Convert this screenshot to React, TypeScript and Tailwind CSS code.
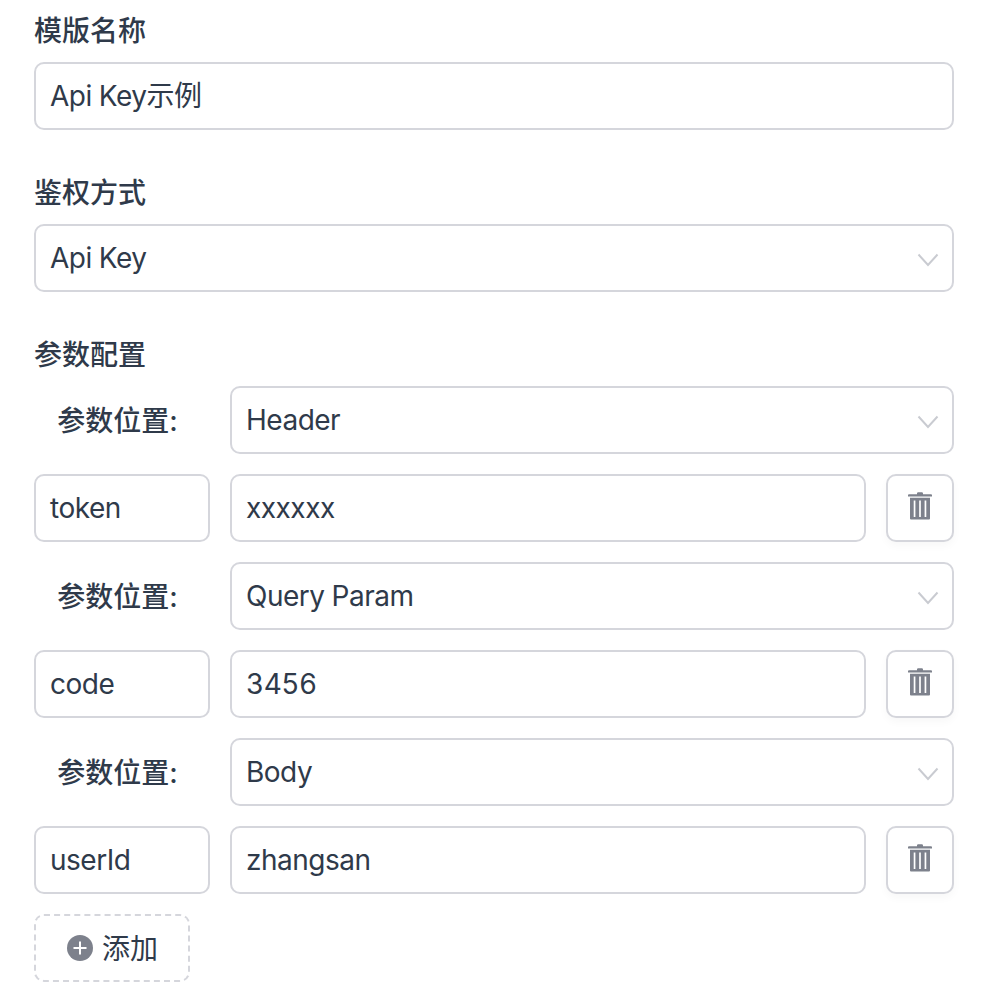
import React from "react";

const FONT = { fontFamily: '"Inter", "Noto Sans CJK SC", sans-serif' };

function Chevron() {
  return (
    <svg width="22" height="14" viewBox="0 0 22 14" fill="none" className="shrink-0 mt-[3px]">
      <path d="M1.5 1.5 L11 12 L20.5 1.5" stroke="#c9cbd1" strokeWidth="2" />
    </svg>
  );
}

function Trash() {
  return (
    <svg width="24" height="28" viewBox="0 0 24 28" fill="none" className="mb-[4px]">
      <path d="M9 2.2 V1.5 a1.2 1.2 0 0 1 1.2 -1.2 h3.6 a1.2 1.2 0 0 1 1.2 1.2 V2.2 h8 a1 1 0 0 1 1 1 V4.6 H0 V3.2 a1 1 0 0 1 1 -1 z" fill="#7d818c" />
      <path fillRule="evenodd" clipRule="evenodd" d="M2 5.8 h20 V26.5 a1 1 0 0 1 -1 1 h-18 a1 1 0 0 1 -1 -1 z M5.7 8.6 V25 H7.4 V8.6 z M11.15 8.6 V25 H12.85 V8.6 z M16.6 8.6 V25 H18.3 V8.6 z" fill="#7d818c" />
    </svg>
  );
}

function Plus() {
  return (
    <svg width="26" height="26" viewBox="0 0 26 26">
      <circle cx="13" cy="13" r="13" fill="#7d818c" />
      <path d="M13 6.5 V19.5 M6.5 13 H19.5" stroke="#fff" strokeWidth="2" />
    </svg>
  );
}

function Box({ children, className = "" }: { children?: React.ReactNode; className?: string }) {
  return (
    <div className={`h-[68px] flex items-center border-2 border-[#d5d6dc] rounded-[10px] bg-white px-[14px] text-[28px] text-[#2f3a4a] ${className}`}>
      {children}
    </div>
  );
}

function T({ children }: { children: React.ReactNode }) {
  return <span className="tracking-[-0.5px] tabular-nums">{children}</span>;
}

function Select({ value }: { value: string }) {
  return (
    <Box className="flex-1 justify-between pr-[13px]">
      <T>{value}</T>
      <Chevron />
    </Box>
  );
}

function Label({ children }: { children: React.ReactNode }) {
  return <div className="h-[32px] flex items-center pt-[1px] text-[28px] leading-[32px] font-medium text-[#2f3a4a]">{children}</div>;
}

function ParamGroup({ place, name, value }: { place: string; name: string; value: string }) {
  return (
    <>
      <div className="flex items-center gap-5">
        <div className="w-[176px] pr-[9px] pt-[1px] text-center text-[28px] font-medium text-[#2f3a4a]">参数位置:</div>
        <Select value={place} />
      </div>
      <div className="flex gap-5">
        <Box className="w-[176px]"><T>{name}</T></Box>
        <Box className="flex-1"><T>{value}</T></Box>
        <button className="w-[68px] h-[68px] flex items-center justify-center border-2 border-[#d5d6dc] rounded-[10px] bg-white shadow-[0_4px_8px_rgba(0,0,0,0.03)]">
          <Trash />
        </button>
      </div>
    </>
  );
}

export default function App() {
  return (
    <div style={FONT} className="w-[992px] h-[992px] bg-white overflow-hidden pl-[34px] pr-[38px] pt-[14px] flex flex-col">
      <Label>模版名称</Label>
      <div className="mt-[16px]"><Box><T>Api Key示例</T></Box></div>
      <div className="mt-[46px]"><Label>鉴权方式</Label></div>
      <div className="mt-[16px] flex"><Select value="Api Key" /></div>
      <div className="mt-[46px]"><Label>参数配置</Label></div>
      <div className="mt-[16px] flex flex-col gap-5">
        <ParamGroup place="Header" name="token" value="xxxxxx" />
        <ParamGroup place="Query Param" name="code" value="3456" />
        <ParamGroup place="Body" name="userId" value="zhangsan" />
        <button className="w-[156px] h-[68px] pl-[1px] flex items-center justify-center gap-[9px] border-2 border-dashed border-[#d5d6dc] rounded-[10px] bg-white text-[28px] text-[#2f3a4a]">
          <Plus />
          <span className="pt-[1px]">添加</span>
        </button>
      </div>
    </div>
  );
}
